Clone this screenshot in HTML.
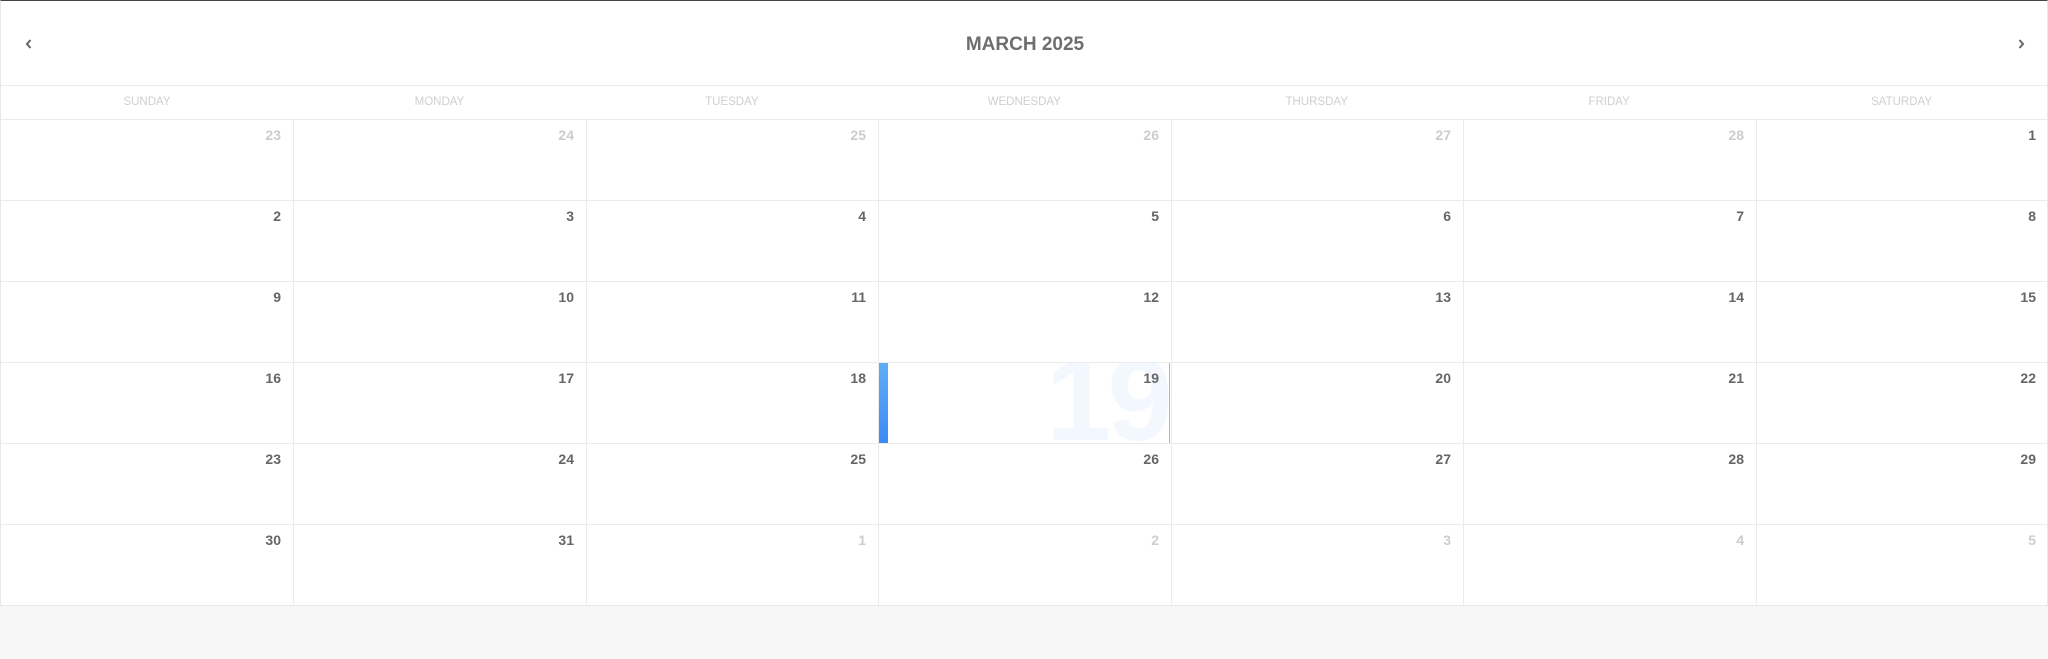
<!DOCTYPE html>
<html><head><style>
*{margin:0;padding:0;box-sizing:border-box}
body{width:2048px;height:659px;background:#f7f7f7;font-family:"Liberation Sans",sans-serif;position:relative;overflow:hidden}
#cal{position:absolute;left:0;top:0;width:2048px;height:606px;background:#fff;border-top:1px solid #444;border-left:1px solid #e8e8e8;border-right:1px solid #e8e8e8;border-bottom:1px solid #e8e8e8}
.title{position:absolute;top:33px;left:0;width:2048px;text-align:center;font-size:19px;font-weight:bold;color:#6e6e6e}
.hl{position:absolute;left:0;width:2048px;height:1px;background:#ebebeb}
.vl{position:absolute;top:119px;height:486px;width:1px;background:#ebebeb}
.wd{position:absolute;top:95px;width:292px;text-align:center;font-size:11.5px;color:#cfcfcf}
.n{position:absolute;z-index:2;width:60px;text-align:right;font-size:14px;font-weight:bold;color:#666}
.o{color:#cdcdcd}
</style></head><body>
<div id="cal">
<div class="title">MARCH 2025</div>
<svg style="left:24px;top:38px;position:absolute" width="8" height="10"><path d="M5.5 1 L2 5 L5.5 9" stroke="#666" stroke-width="2" fill="none"/></svg>
<svg style="left:2016px;top:38px;position:absolute" width="8" height="10"><path d="M2.5 1 L6 5 L2.5 9" stroke="#666" stroke-width="2" fill="none"/></svg>
<div class="hl" style="top:84px"></div>
<div class="hl" style="top:118px"></div>
<div class="hl" style="top:199px"></div>
<div class="hl" style="top:280px"></div>
<div class="hl" style="top:361px"></div>
<div class="hl" style="top:442px"></div>
<div class="hl" style="top:523px"></div>
<div style="position:absolute;left:877px;top:362px;width:292px;height:80px;overflow:hidden">
<div style="position:absolute;left:0;top:0;width:10px;height:80px;background:linear-gradient(#60aef5,#3d8af7)"></div>
<div style="position:absolute;right:1px;top:-22px;font-size:118px;font-weight:bold;color:#f3f8ff;line-height:1;letter-spacing:-4px">19</div>
<div style="position:absolute;right:0;top:0;width:1px;height:80px;background:#8ec0e6"></div>
</div>
</div>
<script>
var g=document.getElementById('cal');var h='';
var cw=292.43;
var names=['SUNDAY','MONDAY','TUESDAY','WEDNESDAY','THURSDAY','FRIDAY','SATURDAY'];
for(var i=0;i<7;i++){h+='<div class="wd" style="left:'+(i*cw)+'px">'+names[i]+'</div>';if(i>0)h+='<div class="vl" style="left:'+Math.round(i*cw)+'px"></div>';}
var all=[[23,1],[24,1],[25,1],[26,1],[27,1],[28,1],[1,0]];
for(i=2;i<=31;i++)all.push([i,0]);for(i=1;i<=5;i++)all.push([i,1]);
for(var k=0;k<42;k++){var r=Math.floor(k/7),c=k%7;var x=Math.round((c+1)*cw)-12-60;var y=126+r*81;
h+='<div class="n'+(all[k][1]?' o':'')+'" style="left:'+x+'px;top:'+y+'px">'+all[k][0]+'</div>';}
g.insertAdjacentHTML('beforeend',h);
</script>
</body></html>
